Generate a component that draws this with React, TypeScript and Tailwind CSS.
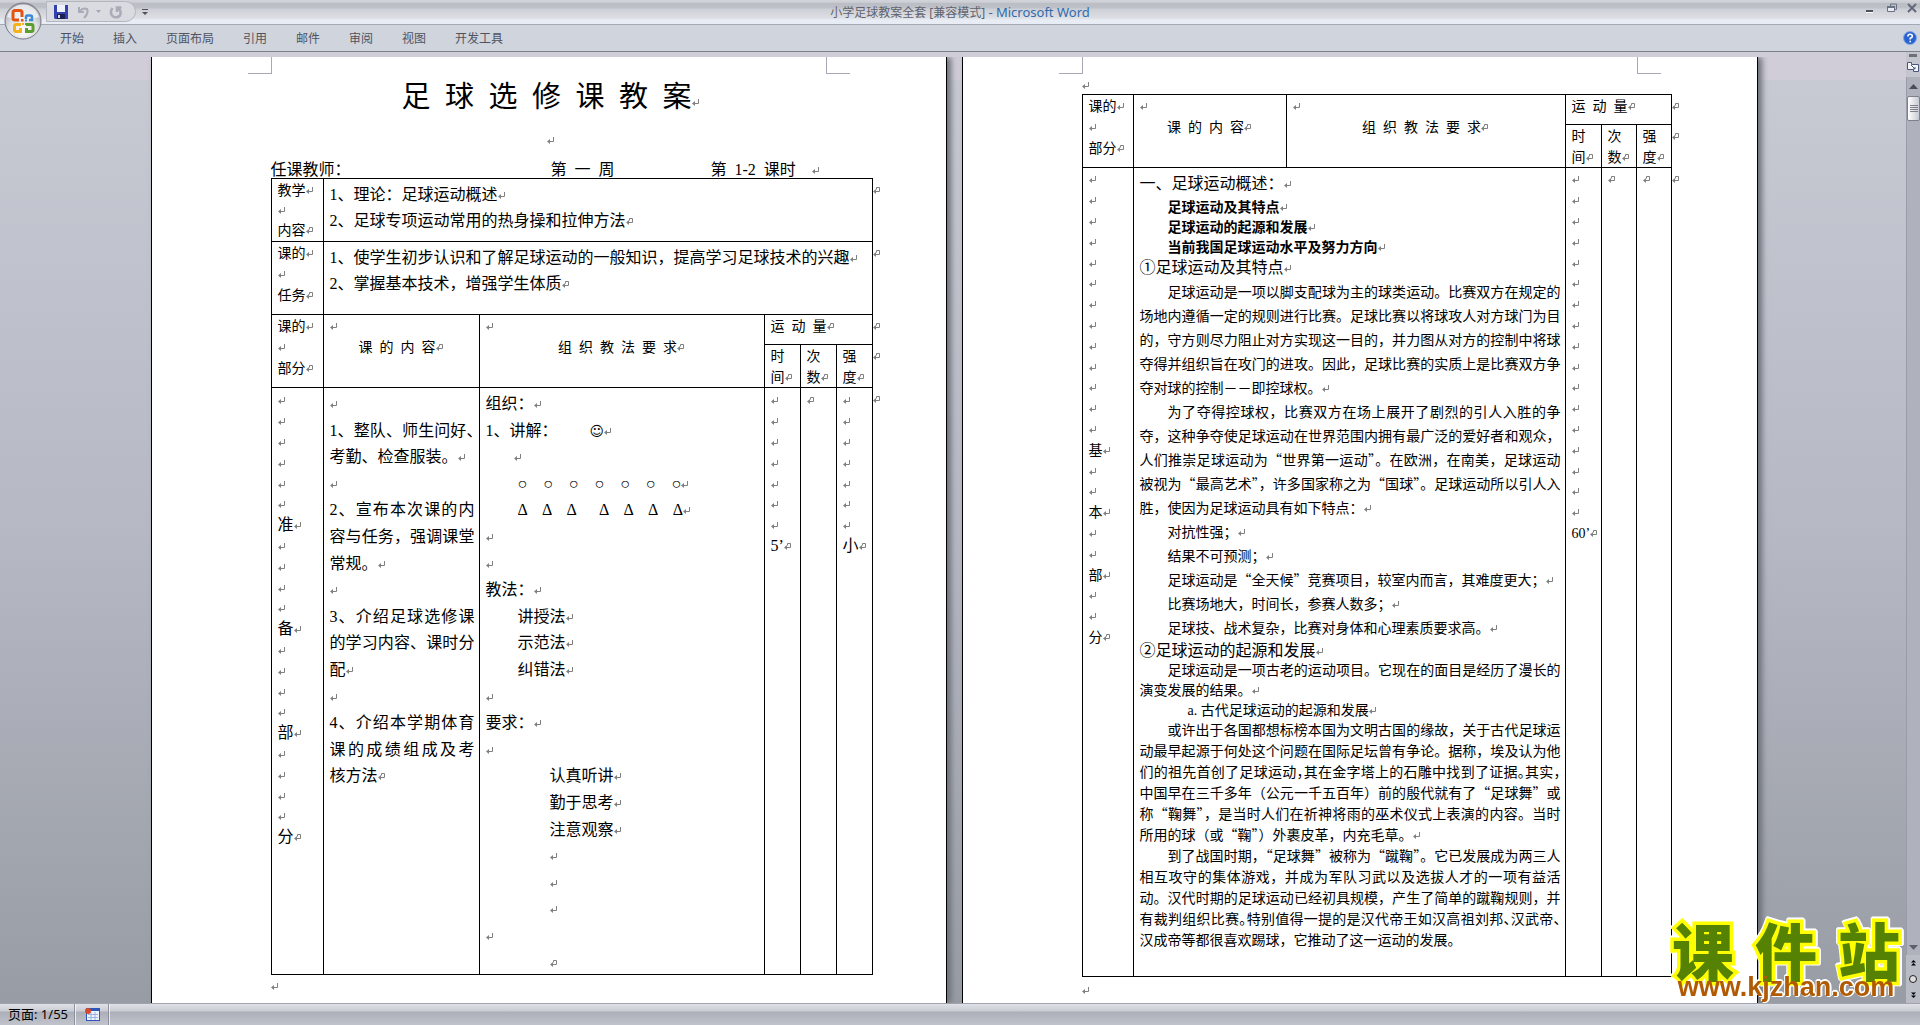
import type { ReactNode } from 'react';

type Line = {
  text?: ReactNode;
  className?: string;
  fill?: boolean; // stretched to both margins
  tight?: boolean; // half-width punctuation
  cell?: boolean; // ends with the end-of-cell mark
  open?: boolean; // runs on, no mark at all
};

const tabs = ['开始', '插入', '页面布局', '引用', '邮件', '审阅', '视图', '开发工具'];

const Mark = ({ cell = false }: { cell?: boolean }) => (
  <svg viewBox="0 0 8 8" className="inline-block h-2 w-2 shrink-0 align-[1px]" fill="none" stroke="#808080">
    {cell ? <path d="M1 5.5H6.5V1.5H3.5V3.5" /> : <path d="M1 5.5H6.5V1" />}
    <path d="M0 5.5L3 3V8Z" fill="#808080" stroke="none" />
  </svg>
);

const Num = ({ children }: { children: ReactNode }) => (
  <span className="font-['Liberation_Serif','Noto_Sans_CJK_SC',serif] leading-none">{children}</span>
);

function Row({ line, height }: { line: Line; height: string }) {
  return (
    <div
      className={`${height} ${line.className ?? ''} whitespace-nowrap ${
        line.fill ? '[text-align-last:justify]' : ''
      } ${line.tight ? "[font-feature-settings:'halt']" : ''}`}
    >
      {line.text}
      {!line.fill && !line.open && <Mark cell={line.cell} />}
    </div>
  );
}

// 20.8px line pitch
const narrow = (i: number) => (i % 5 === 4 ? 'h-5 leading-5' : 'h-[21px] leading-[21px]');
// 26.6px line pitch
const wide = (i: number) => (i % 5 === 1 || i % 5 === 3 ? 'h-[26px] leading-[26px]' : 'h-[27px] leading-[27px]');

const Lines = ({ lines, pitch }: { lines: Line[]; pitch: (i: number) => string }) => (
  <>
    {lines.map((line, i) => (
      <Row key={i} line={line} height={pitch(i)} />
    ))}
  </>
);

const blanks = (n: number): Line[] => Array.from({ length: n }, () => ({}));

const prepare: Line[] = [
  ...blanks(6),
  { text: '准' },
  ...blanks(4),
  { text: '备' },
  ...blanks(4),
  { text: '部' },
  ...blanks(4),
  { text: '分', cell: true },
];

const basic: Line[] = [
  ...blanks(13),
  { text: '基' },
  ...blanks(2),
  { text: '本' },
  ...blanks(2),
  { text: '部' },
  ...blanks(2),
  { text: '分', cell: true },
];

const content: Line[] = [
  {},
  { text: <><Num>1</Num>、整队、师生问好<span className="[font-feature-settings:'halt']">、</span></>, fill: true },
  { text: '考勤、检查服装。' },
  {},
  { text: <><Num>2</Num>、宣布本次课的内</>, fill: true },
  { text: '容与任务，强调课堂', fill: true },
  { text: '常规。' },
  {},
  { text: <><Num>3</Num>、介绍足球选修课</>, fill: true },
  { text: '的学习内容、课时分', fill: true },
  { text: '配' },
  {},
  { text: <><Num>4</Num>、介绍本学期体育</>, fill: true },
  { text: '课的成绩组成及考', fill: true },
  { text: '核方法', cell: true },
];

const method: Line[] = [
  { text: '组织：' },
  { text: <><Num>1</Num>、讲解：<span className="ml-8 font-['DejaVu_Sans',sans-serif] text-sm/none">☺</span></> },
  { className: 'pl-7' },
  { text: <span className="whitespace-pre"><Num>{'○    ○    ○    ○    ○    ○    ○'}</Num></span>, className: 'pl-8' },
  { text: <span className="whitespace-pre"><Num>{'Δ    Δ    Δ      Δ    Δ    Δ    Δ'}</Num></span>, className: 'pl-8' },
  {},
  {},
  { text: '教法：' },
  { text: '讲授法', className: 'pl-8' },
  { text: '示范法', className: 'pl-8' },
  { text: '纠错法', className: 'pl-8' },
  {},
  { text: '要求：' },
  {},
  { text: '认真听讲', className: 'pl-16' },
  { text: '勤于思考', className: 'pl-16' },
  { text: '注意观察', className: 'pl-16' },
  { className: 'pl-16' },
  { className: 'pl-16' },
  { className: 'pl-16' },
  {},
  { className: 'pl-16', cell: true },
];

const overview: Line[] = [
  { text: '足球运动是一项以脚支配球为主的球类运动。比赛双方在规定的', className: 'pl-7', fill: true },
  { text: '场地内遵循一定的规则进行比赛。足球比赛以将球攻人对方球门为目', fill: true },
  { text: '的，守方则尽力阻止对方实现这一目的，并力图从对方的控制中将球', fill: true },
  { text: '夺得并组织旨在攻门的进攻。因此，足球比赛的实质上是比赛双方争', fill: true },
  { text: '夺对球的控制－－即控球权。' },
  { text: '为了夺得控球权，比赛双方在场上展开了剧烈的引人入胜的争', className: 'pl-7', fill: true },
  { text: '夺，这种争夺使足球运动在世界范围内拥有最广泛的爱好者和观众，', fill: true },
  { text: '人们推崇足球运动为“世界第一运动”。在欧洲，在南美，足球运动', fill: true },
  { text: '被视为“最高艺术”，许多国家称之为“国球”。足球运动所以引人入', fill: true },
  { text: '胜，使因为足球运动具有如下特点：' },
  { text: '对抗性强；', className: 'pl-7' },
  { text: '结果不可预测；', className: 'pl-7' },
  { text: '足球运动是“全天候”竞赛项目，较室内而言，其难度更大；', className: 'pl-7' },
  { text: '比赛场地大，时间长，参赛人数多；', className: 'pl-7' },
  { text: '足球技、战术复杂，比赛对身体和心理素质要求高。', className: 'pl-7' },
];

const origin: Line[] = [
  { text: '②足球运动的起源和发展', className: 'text-base/5' },
  { text: '足球运动是一项古老的运动项目。它现在的面目是经历了漫长的', className: 'pl-7', fill: true },
  { text: '演变发展的结果。' },
  { text: <><Num>a. </Num>古代足球运动的起源和发展</>, className: 'pl-12' },
];

const history: Line[] = [
  { text: '或许出于各国都想标榜本国为文明古国的缘故，关于古代足球运', className: 'pl-7', fill: true },
  { text: '动最早起源于何处这个问题在国际足坛曾有争论。据称，埃及认为他', fill: true },
  { text: '们的祖先首创了足球运动，其在金字塔上的石雕中找到了证据。其实，', fill: true, tight: true },
  { text: '中国早在三千多年（公元一千五百年）前的殷代就有了“足球舞”或', fill: true },
  { text: '称“鞠舞”，是当时人们在祈神将雨的巫术仪式上表演的内容。当时', fill: true },
  { text: '所用的球（或“鞠”）外裹皮革，内充毛草。' },
  { text: '到了战国时期，“足球舞”被称为“蹴鞠”。它已发展成为两三人', className: 'pl-7', fill: true },
  { text: '相互攻守的集体游戏，并成为军队习武以及选拔人才的一项有益活', fill: true },
  { text: '动。汉代时期的足球运动已经初具规模，产生了简单的蹴鞠规则，并', fill: true },
  { text: '有裁判组织比赛。特别值得一提的是汉代帝王如汉高祖刘邦、汉武帝、', fill: true, tight: true },
  { text: '汉成帝等都很喜欢踢球，它推动了这一运动的发展。', open: true },
];

const cellBase = 'border border-black p-0 align-top font-normal text-left';

const RowEnd = () => (
  <td className="p-0 align-top text-sm/[21px]">
    <Mark cell />
  </td>
);

// the 课的部分 / 内容 / 要求 / 运动量 header rows, shared by both tables
function HeaderRows() {
  return (
    <>
      <tr className="h-[30px] text-sm/[21px]">
        <th rowSpan={2} className={`${cellBase} px-1.5`}>
          <div>课的<Mark /></div>
          <div><Mark /></div>
          <div>部分<Mark cell /></div>
        </th>
        <th rowSpan={2} className={`${cellBase} px-1.5`}>
          <div><Mark /></div>
          <div className="text-center">课&ensp;的&ensp;内&ensp;容<Mark cell /></div>
        </th>
        <th rowSpan={2} className={`${cellBase} px-1.5`}>
          <div><Mark /></div>
          <div className="text-center">组&ensp;织&ensp;教&ensp;法&ensp;要&ensp;求<Mark cell /></div>
        </th>
        <th colSpan={3} className={`${cellBase} px-1.5`}>运&ensp;动&ensp;量<Mark cell /></th>
        <RowEnd />
      </tr>
      <tr className="h-[42px] text-sm/[21px]">
        {['时间', '次数', '强度'].map((name) => (
          <th key={name} className={`${cellBase} whitespace-nowrap pl-1.5`}>
            {name[0]}
            <br />
            {name[1]}
            <Mark cell />
          </th>
        ))}
        <RowEnd />
      </tr>
    </>
  );
}

function Page({ children }: { children: ReactNode }) {
  return (
    <article className="flex w-[796px] shrink-0 flex-col border-x border-black bg-white shadow-[4px_0_6px_#6b6f78]">
      <div className="flex h-[17px] shrink-0 justify-between px-24">
        <div className="w-6 border-r border-b border-[#a9a9b5]" />
        <div className="w-6 border-b border-l border-[#a9a9b5]" />
      </div>
      <div className="pl-[119px]">{children}</div>
    </article>
  );
}

function FirstPage() {
  return (
    <Page>
      <h1 className="h-10 w-[560px] text-center text-[29px]/[40px]">
        足&ensp;球&ensp;选&ensp;修&ensp;课&ensp;教&ensp;案<Mark />
      </h1>
      <div className="flex h-11 w-[560px] items-center justify-center pt-2"><Mark /></div>
      <div className="flex h-5 text-base/5">
        <span className="w-[280px]">任课教师：</span>
        <span className="w-40">第&ensp;一&ensp;周</span>
        <span>第&ensp;<Num>1-2</Num>&ensp;课时&ensp;&ensp;<Mark /></span>
      </div>
      <table className="w-[614px] table-fixed border-collapse">
        <colgroup>
          <col className="w-[52px]" />
          <col className="w-[156px]" />
          <col className="w-[285px]" />
          <col className="w-9" />
          <col className="w-9" />
          <col className="w-9" />
          <col />
        </colgroup>
        <tbody>
          <tr className="h-[63px]">
            <th className={`${cellBase} px-1.5 text-sm/5`}>
              <div>教学<Mark /></div>
              <div><Mark /></div>
              <div>内容<Mark cell /></div>
            </th>
            <td colSpan={5} className={`${cellBase} px-1.5 pt-px text-base/[26px]`}>
              <div className="h-[26px]"><Num>1</Num>、理论：足球运动概述<Mark /></div>
              <div className="h-[26px]"><Num>2</Num>、足球专项运动常用的热身操和拉伸方法<Mark cell /></div>
            </td>
            <RowEnd />
          </tr>
          <tr className="h-[73px]">
            <th className={`${cellBase} px-1.5 text-sm/[21px]`}>
              <div>课的<Mark /></div>
              <div><Mark /></div>
              <div>任务<Mark cell /></div>
            </th>
            <td colSpan={5} className={`${cellBase} px-1.5 pt-px text-base/[26px]`}>
              <div className="h-[26px]"><Num>1</Num>、使学生初步认识和了解足球运动的一般知识，提高学习足球技术的兴趣<Mark /></div>
              <div className="h-[26px]"><Num>2</Num>、掌握基本技术，增强学生体质<Mark cell /></div>
            </td>
            <RowEnd />
          </tr>
          <HeaderRows />
          <tr className="h-[587px] text-base">
            <th className={`${cellBase} px-1.5`}><Lines lines={prepare} pitch={narrow} /></th>
            <td className={`${cellBase} pt-px pr-1 pl-1.5`}><Lines lines={content} pitch={wide} /></td>
            <td className={`${cellBase} px-1.5 pt-px`}><Lines lines={method} pitch={wide} /></td>
            <td className={`${cellBase} pl-1.5`}>
              <Lines lines={[...blanks(7), { text: <Num>5’</Num>, cell: true }]} pitch={narrow} />
            </td>
            <td className={`${cellBase} pl-1.5`}><Lines lines={[{ cell: true }]} pitch={narrow} /></td>
            <td className={`${cellBase} pl-1.5`}>
              <Lines lines={[...blanks(7), { text: '小', cell: true }]} pitch={narrow} />
            </td>
            <RowEnd />
          </tr>
        </tbody>
      </table>
      <div className="text-sm/[21px]"><Mark /></div>
    </Page>
  );
}

function SecondPage() {
  return (
    <Page>
      <div className="h-5 text-sm/5"><Mark /></div>
      <table className="w-[602px] table-fixed border-collapse">
        <colgroup>
          <col className="w-[51px]" />
          <col className="w-[153px]" />
          <col className="w-[279px]" />
          <col className="w-9" />
          <col className="w-[35px]" />
          <col className="w-[35px]" />
          <col />
        </colgroup>
        <tbody>
          <HeaderRows />
          <tr className="h-[809px] text-sm">
            <th className={`${cellBase} px-1.5`}><Lines lines={basic} pitch={narrow} /></th>
            <td colSpan={2} className={`${cellBase} pt-px pr-1 pl-1.5`}>
              <div className="text-base/[27px]">一、足球运动概述：<Mark /></div>
              <div className="pl-7 leading-5 font-bold">
                <div>足球运动及其特点<Mark /></div>
                <div>足球运动的起源和发展<Mark /></div>
                <div>当前我国足球运动水平及努力方向<Mark /></div>
              </div>
              <div className="pb-0.5 text-base/[21px]">①足球运动及其特点<Mark /></div>
              <Lines lines={overview} pitch={() => 'h-6 leading-6'} />
              <Lines lines={origin} pitch={() => 'h-5 leading-5'} />
              <Lines lines={history} pitch={() => 'h-[21px] leading-[21px]'} />
            </td>
            <td className={`${cellBase} pl-1.5`}>
              <Lines lines={[...blanks(17), { text: <Num>60’</Num>, cell: true }]} pitch={narrow} />
            </td>
            <td className={`${cellBase} pl-1.5`}><Lines lines={[{ cell: true }]} pitch={narrow} /></td>
            <td className={`${cellBase} pl-1.5`}><Lines lines={[{ cell: true }]} pitch={narrow} /></td>
            <RowEnd />
          </tr>
        </tbody>
      </table>
      <div className="text-sm/6"><Mark /></div>
    </Page>
  );
}

const OfficeLogo = () => (
  <svg viewBox="0 0 38 38" className="h-[38px] w-[38px]">
    <defs>
      <radialGradient id="orb" cx="50%" cy="75%" r="75%">
        <stop offset="0" stopColor="#ffffff" />
        <stop offset="0.55" stopColor="#dcdde1" />
        <stop offset="1" stopColor="#9b9da6" />
      </radialGradient>
    </defs>
    <circle cx="19" cy="19" r="18" fill="url(#orb)" stroke="#777a84" />
    <path d="M3 15A16.500 16.500 0 0 1 35 15Q19 21 3 15Z" fill="#f4f5f7" opacity="0.8" />
    <g fill="none" strokeWidth="3">
      <path d="M18 15V10.500Q18 8.500 16 8.500H11Q9 8.500 9 10.500V16Q9 18 11 18H15" stroke="#e4530f" />
      <path d="M22 17V15Q22 13.500 23.500 13.500H26.500Q28 13.500 28 15V18H25" stroke="#3b8bd6" strokeWidth="2.500" />
      <path d="M17 22.500H12Q10.500 22.500 10.500 24V28Q10.500 29.500 12 29.500H16.500V26" stroke="#f6b21b" />
      <path d="M22 22.500H27.500Q29 22.500 29 24V28Q29 29.500 27.500 29.500H22.500V26" stroke="#5d9e2f" />
    </g>
    <path d="M17 17h2.500v2.500h-2.500z" fill="#e4530f" />
    <path d="M21 17.500h2v2h-2z" fill="#3b8bd6" />
    <path d="M18 21h2v2h-2z" fill="#f6b21b" />
    <path d="M21 21h2v2h-2z" fill="#5d9e2f" />
  </svg>
);

function TitleBar() {
  return (
    <header className="relative shrink-0">
      <div className="flex h-6 items-start justify-between bg-[linear-gradient(#d3d5db_0,#c8cad2_3px,#bbbdc5_3px,#bfc1c9_8px,#cdcfd6_9px,#dddfe4_18px,#e8ecf4_20px,#e8ecf4_24px)]">
        <div className="flex w-[320px] items-center pt-px pl-[46px]">
          <div className="flex h-[21px] w-[90px] items-center rounded-r-full border border-[#b3b6bf] bg-[#d9dbe1] pl-[7px]">
            <button aria-label="保存">
              <svg viewBox="0 0 14 14" className="h-3.5 w-3.5">
                <path d="M0 0h14v14H1L0 13z" fill="#3440ac" />
                <path d="M3 0h8v7H3z" fill="#eef2ff" />
                <path d="M3 9h8v5H3z" fill="#1c2050" />
                <path d="M4 10h2v3H4z" fill="#d0d4e8" />
              </svg>
            </button>
            <button aria-label="撤消" className="ml-2">
              <svg viewBox="0 0 14 14" className="h-3.5 w-3.5" fill="none" stroke="#a9acb7" strokeWidth="2">
                <path d="M3 2V7H8M3 7Q7 2 11 4Q13 8 8 13" />
              </svg>
            </button>
            <svg viewBox="0 0 5 3" className="ml-1.5 h-[3px] w-[5px]"><path d="M0 0h5L2.500 3z" fill="#a3a6b0" /></svg>
            <button aria-label="恢复" className="ml-2">
              <svg viewBox="0 0 14 14" className="h-3.5 w-3.5" fill="none" stroke="#a9acb7" strokeWidth="2.500">
                <path d="M3.500 3Q0 8 4 11.500Q8 13.500 11 10.500Q13 6 9 3.500M8 7V2.500H12.500" />
              </svg>
            </button>
          </div>
          <button aria-label="自定义快速访问工具栏" className="ml-1.5">
            <svg viewBox="0 0 6 6" className="h-1.5 w-1.5"><path d="M0 0h6v1H0zM0 3h6L3 6z" fill="#50535d" /></svg>
          </button>
        </div>
        <div className="pt-0.5 font-['Noto_Sans','Noto_Sans_CJK_SC',sans-serif] text-xs/5 text-[#5f626c]">
          小学足球教案全套 [兼容模式] <span className="text-[13px] text-[#2f6cae]">- Microsoft Word</span>
        </div>
        <div className="flex w-[320px] justify-end gap-2.5 pt-[3px] pr-[3px]">
          <button aria-label="最小化">
            <svg viewBox="0 0 10 10" className="h-2.5 w-2.5"><path d="M1 7h7v2H1z" fill="#4e525e" /><path d="M1 9h7v1H1z" fill="#fff" /></svg>
          </button>
          <button aria-label="还原" className="ml-0.5">
            <svg viewBox="0 0 10 10" className="h-2.5 w-2.5" fill="none" stroke="#6b7284">
              <path d="M3.500 3V1H9.500V6.500H8" /><path d="M0.500 3.500H7.500V8.500H0.500Z" fill="#e8ebf3" /><path d="M0 4H8" strokeWidth="2" />
            </svg>
          </button>
          <button aria-label="关闭">
            <svg viewBox="0 0 10 10" className="h-2.5 w-2.5" stroke="#626878" strokeWidth="2"><path d="M1 1L9 9M9 1L1 9" /></svg>
          </button>
        </div>
      </div>
      <nav className="flex h-7 items-center justify-between border-t border-b border-t-[#a5a9b5] border-b-[#7c828c] bg-[#d0d4dd] pr-[3px] pl-[60px]">
        <div className="flex gap-[29px] text-xs text-[#50535f]">
          {tabs.map((tab) => (
            <button key={tab}>{tab}</button>
          ))}
        </div>
        <button aria-label="帮助">
          <svg viewBox="0 0 14 14" className="h-3.5 w-3.5">
            <circle cx="7" cy="7" r="6.500" fill="#2a62d0" stroke="#7ea6e6" />
            <path d="M4.800 5.500Q5 3.300 7 3.300Q9.300 3.300 9.300 5.200Q9.300 6.500 7.200 7.300V8.500M7.200 9.800V11.300" fill="none" stroke="#fff" strokeWidth="1.600" />
          </svg>
        </button>
      </nav>
      <button aria-label="Office 按钮" className="absolute top-0.5 left-1">
        <OfficeLogo />
      </button>
    </header>
  );
}

function ScrollBar() {
  return (
    <aside className="flex w-3.5 shrink-0 flex-col items-center bg-[#c3c6cf] pt-0.5">
      <div className="h-[3px] w-2 shrink-0 bg-[#6e7079]" />
      <button aria-label="标尺" className="mt-1">
        <svg viewBox="0 0 12 12" className="h-3 w-3" fill="#f4f5fa" stroke="#4b587c">
          <path d="M0.500 1.500H4.500V3.500H11.500V10.500H6.500V8.500H0.500Z" />
          <path d="M4 4L8 8M8 6V8H6" />
        </svg>
      </button>
      <div className="mt-1 flex w-full flex-1 flex-col items-center border-l border-[#9a9da8] bg-[#afb2bc]">
        <button aria-label="向上滚动" className="flex h-[19px] shrink-0 items-center">
          <svg viewBox="0 0 9 5" className="h-[5px] w-[9px]"><path d="M0 5h9L4.500 0z" fill="#4b4e5a" /></svg>
        </button>
        <div className="flex h-[25px] w-full shrink-0 flex-col items-center justify-center gap-px rounded-xs border border-[#7d808b] bg-gradient-to-r from-white to-[#c8cad4]">
          <span className="h-px w-2 bg-[#7d808b]" />
          <span className="h-px w-2 bg-[#7d808b]" />
          <span className="h-px w-2 bg-[#7d808b]" />
          <span className="h-px w-2 bg-[#7d808b]" />
        </div>
        <button aria-label="向下滚动" className="mt-auto flex h-4 shrink-0 items-center">
          <svg viewBox="0 0 9 5" className="h-[5px] w-[9px]"><path d="M0 0h9L4.500 5z" fill="#5d606c" /></svg>
        </button>
      </div>
      <div className="flex h-12 w-full shrink-0 flex-col items-center justify-around bg-[#b9bcc5]">
        <button aria-label="前一页"><svg viewBox="0 0 5 6" className="h-1.5 w-[5px]"><path d="M0 2.500L2.500 0L5 2.500zM0 5.500L2.500 3L5 5.500z" /></svg></button>
        <button aria-label="选择浏览对象"><svg viewBox="0 0 8 8" className="h-2 w-2"><circle cx="4" cy="4" r="3.500" fill="#ddd" stroke="#222" /></svg></button>
        <button aria-label="下一页"><svg viewBox="0 0 5 6" className="h-1.5 w-[5px]"><path d="M0 0.500L2.500 3L5 0.500zM0 3.500L2.500 6L5 3.500z" /></svg></button>
      </div>
    </aside>
  );
}

function StatusBar() {
  return (
    <footer className="flex h-[22px] shrink-0 items-stretch border-t border-[#a0a3ac] bg-[linear-gradient(#dfe1e7_0,#c9ccd3_7px,#acafb8_8px,#c2c5cd_22px)] text-xs text-black">
      <span className="flex w-[75px] items-center border-r border-[#8e919b] pl-2 font-['Noto_Sans','Noto_Sans_CJK_SC',sans-serif] text-[13px]">页面: 1/55</span>
      <button aria-label="宏" className="flex w-[34px] items-center justify-center border-r border-l border-r-[#8e919b] border-l-white/70">
        <svg viewBox="0 0 15 13" className="h-[13px] w-[15px]">
          <path d="M1 0h14v13H1z" fill="#2c55b8" />
          <path d="M2 3h12v9H2z" fill="#eef3ff" />
          <path d="M3 6.500h10M3 9.500h10M6 4v8M10 4v8" stroke="#9db2dc" />
          <circle cx="3" cy="3" r="3" fill="#d8492c" />
        </svg>
      </button>
      <span className="border-l border-white/70" />
    </footer>
  );
}

const Watermark = () => (
  <div className="absolute right-5 bottom-0.5 w-[228px] [filter:drop-shadow(1px_1px_0_#fff)_drop-shadow(-1px_-1px_0_#fff)_drop-shadow(1px_-1px_0_#fff)]">
    <div className="text-[62px]/[50px] font-black text-[#568203] [-webkit-text-stroke:7px_#ff0] [paint-order:stroke_fill] [text-align-last:justify]">
      课件站
    </div>
    <a href="#" className="block text-center font-['Liberation_Sans',sans-serif] text-[27px]/[27px] font-bold text-[#b05a04]">
      www.kjzhan.com
    </a>
  </div>
);

export default function App() {
  return (
    <div lang="zh-CN" className="flex h-screen flex-col overflow-hidden bg-[#d0cdd8] font-['Noto_Sans_CJK_SC',sans-serif] text-black">
      <TitleBar />
      <main className="relative flex min-h-0 flex-1">
        <div className="mt-[5px] flex min-w-0 flex-1 justify-center gap-[15px] overflow-hidden bg-[linear-gradient(#d0cdd8_0,#d0cdd8_23px,#c7cad3_23px,#b6b9c4_50%,#989ca4_100%)] pl-0.5">
          <FirstPage />
          <SecondPage />
        </div>
        <ScrollBar />
        <Watermark />
      </main>
      <StatusBar />
    </div>
  );
}
